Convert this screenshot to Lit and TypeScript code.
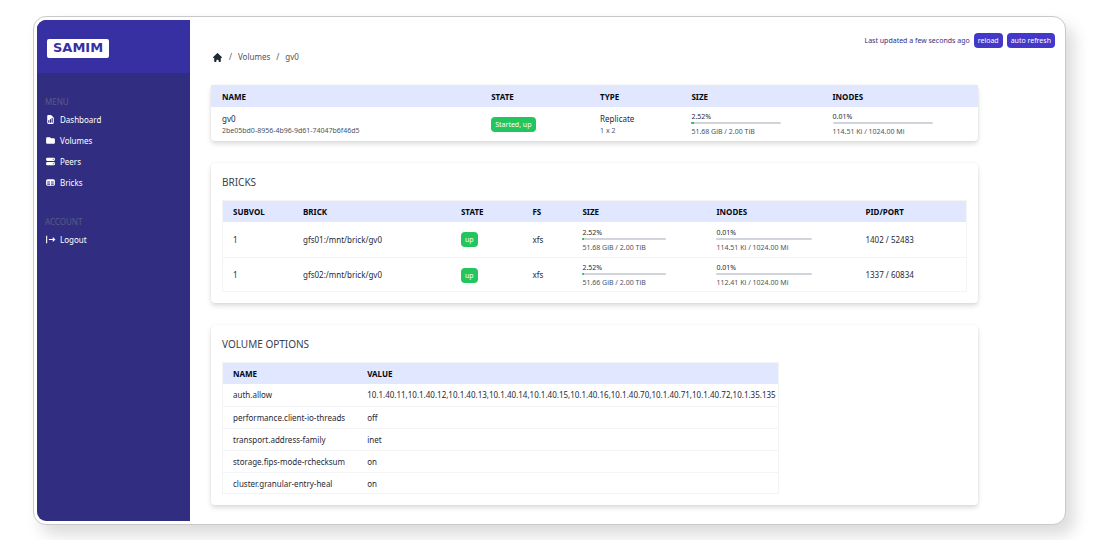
import { LitElement, html, css, svg } from "lit";
import { customElement, property } from "lit/decorators.js";

const icons: Record<string, ReturnType<typeof svg>> = {
  home: svg`<path d="M10.707 2.293a1 1 0 00-1.414 0l-7 7a1 1 0 001.414 1.414L4 10.414V17a1 1 0 001 1h2a1 1 0 001-1v-2a1 1 0 011-1h2a1 1 0 011 1v2a1 1 0 001 1h2a1 1 0 001-1v-6.586l.293.293a1 1 0 001.414-1.414l-7-7z"/>`,
  report: svg`<path fill-rule="evenodd" d="M6 2a2 2 0 00-2 2v12a2 2 0 002 2h8a2 2 0 002-2V7.414A2 2 0 0015.414 6L12 2.586A2 2 0 0010.586 2H6zm2 10a1 1 0 10-2 0v3a1 1 0 102 0v-3zm2-3a1 1 0 011 1v5a1 1 0 11-2 0v-5a1 1 0 011-1zm4-1a1 1 0 10-2 0v7a1 1 0 102 0V8z"/>`,
  folder: svg`<path d="M2 6a2 2 0 012-2h5l2 2h5a2 2 0 012 2v6a2 2 0 01-2 2H4a2 2 0 01-2-2V6z"/>`,
  server: svg`<path fill-rule="evenodd" d="M2 5a2 2 0 012-2h12a2 2 0 012 2v2a2 2 0 01-2 2H4a2 2 0 01-2-2V5zm14 1a1 1 0 11-2 0 1 1 0 012 0zM2 13a2 2 0 012-2h12a2 2 0 012 2v2a2 2 0 01-2 2H4a2 2 0 01-2-2v-2zm14 1a1 1 0 11-2 0 1 1 0 012 0z"/>`,
  table: svg`<path fill-rule="evenodd" d="M5 4a3 3 0 00-3 3v6a3 3 0 003 3h10a3 3 0 003-3V7a3 3 0 00-3-3H5zm-1 9v-1h5v2H5a1 1 0 01-1-1zm7 1h4a1 1 0 001-1v-1h-5v2zm0-4h5V8h-5v2zM9 8H4v2h5V8z"/>`,
  logout: svg`<path d="M3 3v14M7 10h10.500M14 6.500l3.500 3.500-3.500 3.500" fill="none" stroke="currentColor" stroke-width="2"/>`,
};

@customElement("ui-icon")
class UiIcon extends LitElement {
  static styles = css`
    :host { display: inline-flex; width: 11px; height: 11px; flex: none; }
    svg { width: 100%; height: 100%; }
  `;
  @property() name = "home";
  render() {
    return html`<svg viewBox="0 0 20 20" fill="currentColor" aria-hidden="true">${icons[this.name]}</svg>`;
  }
}

@customElement("usage-meter")
class UsageMeter extends LitElement {
  static styles = css`
    :host { display: block; font-size: 7px; }
    .percent { display: block; height: 9px; line-height: 9px; color: #1f2937; }
    .track { width: 75%; height: 2px; margin: 1px 0; background: #d1d5db; border-radius: 1px; overflow: hidden; }
    .fill { height: 100%; background: #22c55e; }
    .detail { display: block; height: 11px; line-height: 13px; color: #4b5563; white-space: nowrap; }
  `;
  @property({ type: Number }) value = 0;
  @property() detail = "";
  render() {
    return html`
      <span class="percent">${this.value.toFixed(2)}%</span>
      <div class="track"><div class="fill" style="width:${this.value}%"></div></div>
      <span class="detail">${this.detail}</span>
    `;
  }
}

const menu = [
  { icon: "report", label: "Dashboard" },
  { icon: "folder", label: "Volumes" },
  { icon: "server", label: "Peers" },
  { icon: "table", label: "Bricks" },
];

const bricks = [
  { brick: "gfs01:/mnt/brick/gv0", size: "51.68 GiB / 2.00 TiB", inodes: "114.51 Ki / 1024.00 Mi", port: "1402 / 52483" },
  { brick: "gfs02:/mnt/brick/gv0", size: "51.66 GiB / 2.00 TiB", inodes: "112.41 Ki / 1024.00 Mi", port: "1337 / 60834" },
];

const options = [
  ["auth.allow", "10.1.40.11,10.1.40.12,10.1.40.13,10.1.40.14,10.1.40.15,10.1.40.16,10.1.40.70,10.1.40.71,10.1.40.72,10.1.35.135"],
  ["performance.client-io-threads", "off"],
  ["transport.address-family", "inet"],
  ["storage.fips-mode-rchecksum", "on"],
  ["cluster.granular-entry-heal", "on"],
];

@customElement("app-root")
class AppRoot extends LitElement {
  static styles = css`
    :host {
      display: block;
      box-sizing: border-box;
      min-height: 100vh;
      padding: 16px 32px 15px 33px;
      background: #fff;
      font-family: "Noto Sans", "Open Sans", sans-serif;
      font-size: 8px;
      line-height: 12px;
      color: #1f2937;
    }
    * { box-sizing: border-box; }
    .frame {
      display: flex;
      min-height: calc(100vh - 31px);
      padding: 3px;
      border: 1px solid #c9c9c9;
      border-radius: 13px;
      background: #fff;
      box-shadow: 8px 10px 16px rgba(0, 0, 0, 0.14);
    }
    .sidebar {
      flex: none;
      width: 153px;
      border-radius: 9px 0 0 9px;
      background: #312e81;
      overflow: hidden;
    }
    .brand { height: 53px; padding: 19px 10px 0; background: #3730a3; }
    .logo {
      display: inline-block;
      height: 19px;
      padding: 0 6px;
      border-radius: 2px;
      background: #fff;
      color: #3730a3;
      font: 700 13px/18px "DejaVu Sans", sans-serif;
      text-decoration: none;
    }
    .nav { display: flex; flex-direction: column; padding: 22px 8px 0; }
    .label { height: 12px; margin: 0 0 2px; font-size: 8px; line-height: 14px; font-weight: 400; color: #5c5a86; }
    .link {
      display: flex;
      align-items: center;
      gap: 4px;
      height: 21px;
      color: #fff;
      text-decoration: none;
    }
    .main { flex: 1; min-width: 0; padding: 13px 7px 15px 21px; }
    .status { display: flex; justify-content: flex-end; align-items: center; gap: 4px; color: #312e81; font-size: 7px; }
    .btn {
      height: 15px;
      padding: 0 4px;
      border: 0;
      border-radius: 4px;
      background: #4338ca;
      color: #fff;
      font: inherit;
    }
    .crumbs { display: flex; align-items: center; gap: 6px; height: 12px; margin: 3px 0 22px; padding-left: 1px; color: #4b5563; }
    .crumbs a { display: flex; color: inherit; text-decoration: none; }
    .crumbs .home { color: #1f2937; }
    .stack { display: flex; flex-direction: column; gap: 22px; max-width: 767px; }
    .card {
      border-radius: 4px;
      background: #fff;
      box-shadow: 0 3px 5px rgba(0, 0, 0, 0.13), 0 0 3px rgba(0, 0, 0, 0.06);
    }
    .panel { padding: 11px; }
    .title { margin: 0; height: 26px; font-size: 10px; line-height: 16px; font-weight: 400; color: #374151; }
    table { border-collapse: separate; border-spacing: 0; }
    .wide { width: 100%; table-layout: fixed; }
    th { height: 22px; padding: 1px 11px 0; background: #e0e7ff; color: #030712; font-weight: 700; text-align: left; }
    td { height: 22px; padding: 0 11px; white-space: nowrap; }
    .tall td { height: 35px; }
    .summary td { height: 34px; }
    .lined { outline: 1px solid #f3f4f6; outline-offset: -1px; }
    .lined tr + tr td { border-top: 1px solid #f3f4f6; }
    .sub { display: block; font-size: 7px; line-height: 11px; color: #4b5563; }
    .badge {
      display: inline-block;
      height: 15px;
      padding: 0 4px;
      border-radius: 4px;
      background: #22c55e;
      color: #fff;
      font-size: 7px;
      line-height: 15px;
      vertical-align: middle;
    }
    .v-name { width: 35.1%; } .v-state { width: 14.2%; } .v-type { width: 11.9%; } .v-size { width: 18.4%; }
    .b-sub { width: 9.4%; } .b-brick { width: 21.2%; } .b-state { width: 9.6%; } .b-fs { width: 6.7%; }
    .b-size { width: 18%; } .b-inodes { width: 20%; }
    .options th:first-child { width: 134px; }
    .options td:last-child { padding-right: 3px; }
  `;

  render() {
    return html`
      <div class="frame">
        <aside class="sidebar">
          <div class="brand"><a class="logo" href="#">SAMIM</a></div>
          <nav class="nav">
            <h2 class="label">MENU</h2>
            ${menu.map((m) => html`<a class="link" href="#"><ui-icon name=${m.icon}></ui-icon>${m.label}</a>`)}
          </nav>
          <nav class="nav">
            <h2 class="label">ACCOUNT</h2>
            <a class="link" href="#"><ui-icon name="logout"></ui-icon>Logout</a>
          </nav>
        </aside>
        <main class="main">
          <div class="status">
            <span>Last updated a few seconds ago</span>
            <button class="btn" type="button">reload</button>
            <button class="btn" type="button">auto refresh</button>
          </div>
          <nav class="crumbs" aria-label="Breadcrumb">
            <a class="home" href="#" aria-label="Home"><ui-icon name="home"></ui-icon></a>
            <span>/</span><a href="#">Volumes</a><span>/</span><span>gv0</span>
          </nav>
          <div class="stack">
            <section class="card">
              <table class="wide summary">
                <thead>
                  <tr>
                    <th class="v-name">NAME</th><th class="v-state">STATE</th><th class="v-type">TYPE</th>
                    <th class="v-size">SIZE</th><th>INODES</th>
                  </tr>
                </thead>
                <tbody>
                  <tr>
                    <td>gv0<span class="sub">2be05bd0-8956-4b96-9d61-74047b6f46d5</span></td>
                    <td><span class="badge">Started, up</span></td>
                    <td>Replicate<span class="sub">1 x 2</span></td>
                    <td><usage-meter .value=${2.52} detail="51.68 GiB / 2.00 TiB"></usage-meter></td>
                    <td><usage-meter .value=${0.01} detail="114.51 Ki / 1024.00 Mi"></usage-meter></td>
                  </tr>
                </tbody>
              </table>
            </section>
            <section class="card panel">
              <h2 class="title">BRICKS</h2>
              <table class="wide tall lined">
                <thead>
                  <tr>
                    <th class="b-sub">SUBVOL</th><th class="b-brick">BRICK</th><th class="b-state">STATE</th>
                    <th class="b-fs">FS</th><th class="b-size">SIZE</th><th class="b-inodes">INODES</th><th>PID/PORT</th>
                  </tr>
                </thead>
                <tbody>
                  ${bricks.map((b) => html`
                    <tr>
                      <td>1</td>
                      <td>${b.brick}</td>
                      <td><span class="badge">up</span></td>
                      <td>xfs</td>
                      <td><usage-meter .value=${2.52} detail=${b.size}></usage-meter></td>
                      <td><usage-meter .value=${0.01} detail=${b.inodes}></usage-meter></td>
                      <td>${b.port}</td>
                    </tr>`)}
                </tbody>
              </table>
            </section>
            <section class="card panel">
              <h2 class="title">VOLUME OPTIONS</h2>
              <table class="options lined">
                <thead><tr><th>NAME</th><th>VALUE</th></tr></thead>
                <tbody>
                  ${options.map(([name, value]) => html`<tr><td>${name}</td><td>${value}</td></tr>`)}
                </tbody>
              </table>
            </section>
          </div>
        </main>
      </div>
    `;
  }
}
